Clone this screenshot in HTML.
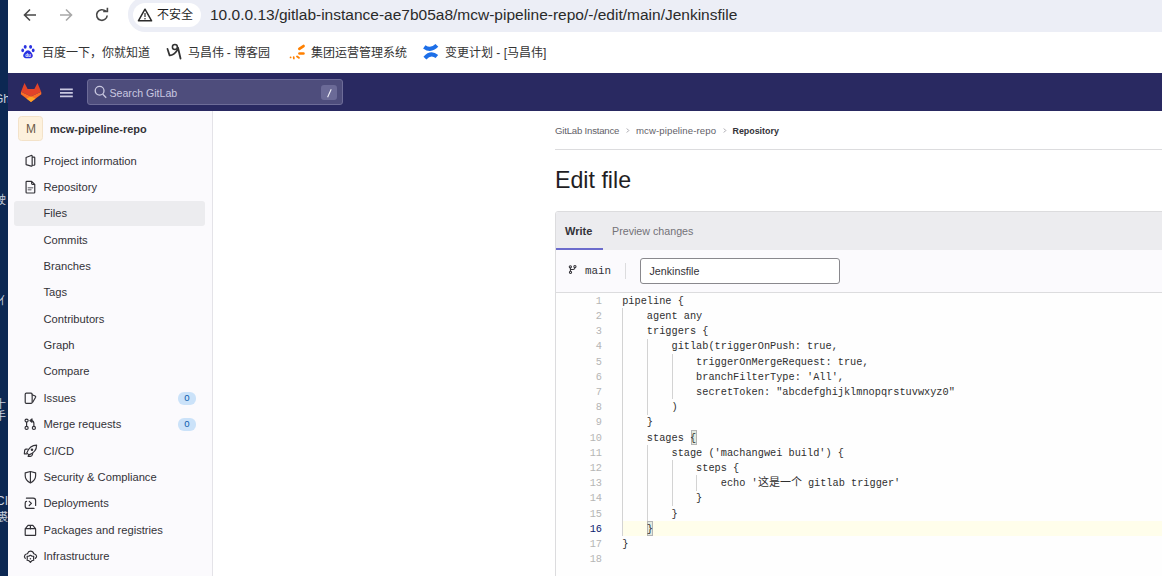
<!DOCTYPE html>
<html lang="zh-CN"><head><meta charset="utf-8">
<style>
*{box-sizing:border-box;margin:0;padding:0}
html,body{width:1162px;height:576px;overflow:hidden;background:#fff;font-family:"Liberation Sans",sans-serif;color:#333238}
.a{position:absolute;white-space:nowrap}
#desk{left:0;top:0;width:8px;height:576px;background:#0c2853;overflow:hidden}
#desk span{position:absolute;color:#c9d0de;font-size:11px;line-height:12px}
#toolbar{left:8px;top:0;width:1154px;height:33px;background:#fff}
#pill{left:128px;top:-3px;width:1060px;height:34.5px;border-radius:17px;background:#eceef6}
#sec{left:133px;top:3px;width:68px;height:24px;border-radius:12px;background:#fff}
#url{left:210px;top:6.3px;font-size:15.5px;line-height:18px;color:#2a2a2a}
#bm{left:8px;top:33px;width:1154px;height:40px;background:#fff}
.bmt{font-size:12px;line-height:14px;color:#333;top:46px}
#hdr{left:8px;top:73px;width:1154px;height:38px;background:#292961}
#search{left:87px;top:79px;width:256px;height:26px;border-radius:3px;background:#4e4d7c;border:1px solid #6d6c98}
#side{left:8px;top:111px;width:205px;height:465px;background:#fbfafd;border-right:1px solid #e4e3e8}
.nav{left:43.5px;font-size:11.2px;line-height:13px;color:#333238}
.ico{position:absolute;left:24px}
#main{left:213px;top:111px;width:949px;height:465px;background:#fff}
.code{font-family:"Liberation Mono",monospace;font-size:10.27px;line-height:15.2px;color:#303030;white-space:pre}
</style></head><body>
<div id="desk" class="a">
  <span style="left:-6px;top:93px;font-size:12px">Gh</span>
  <span style="left:-5px;top:194px">驶</span>
  <span style="left:-1px;top:295px">亻</span>
  <span style="left:-5px;top:398px">十</span>
  <span style="left:-5px;top:410px">手</span>
  <span style="left:-4px;top:495px;font-size:12px">CI</span>
  <span style="left:-3px;top:511px">裘</span>
</div>
<div id="toolbar" class="a"></div>
<!-- nav icons -->
<svg class="a" style="left:22px;top:6px" width="16" height="18" viewBox="0 0 16 18"><path d="M14 9H3M8 3.5L2.5 9 8 14.5" fill="none" stroke="#474747" stroke-width="1.6"/></svg>
<svg class="a" style="left:58px;top:6px" width="16" height="18" viewBox="0 0 16 18"><path d="M2 9h11M8 3.5L13.5 9 8 14.5" fill="none" stroke="#a8a8a8" stroke-width="1.6"/></svg>
<svg class="a" style="left:94px;top:6px" width="16" height="18" viewBox="0 0 16 18"><path d="M13.2 9.5A5.3 5.3 0 1 1 11.6 5.2" fill="none" stroke="#474747" stroke-width="1.6"/><path d="M9.2 5.4h4.2V1.8" fill="none" stroke="#474747" stroke-width="1.6"/></svg>
<div id="pill" class="a"></div>
<div id="sec" class="a"></div>
<svg class="a" style="left:137px;top:8px" width="16" height="14" viewBox="0 0 16 14"><path d="M8 1.2L14.6 12.8H1.4Z" fill="none" stroke="#2b2b2b" stroke-width="1.5" stroke-linejoin="round"/><path d="M8 5v4" stroke="#2b2b2b" stroke-width="1.2"/><circle cx="8" cy="10.8" r=".8" fill="#2b2b2b"/></svg>
<div class="a" style="left:157px;top:7.5px;font-size:12px;line-height:14px;color:#1f1f1f">不安全</div>
<div id="url" class="a">10.0.0.13/gitlab-instance-ae7b05a8/mcw-pipeline-repo/-/edit/main/Jenkinsfile</div>

<div id="bm" class="a"></div>
<!-- baidu paw -->
<svg class="a" style="left:21px;top:44px" width="14" height="15" viewBox="0 0 14 15"><ellipse cx="4.2" cy="2.8" rx="1.5" ry="1.9" fill="#2932e1"/><ellipse cx="9.6" cy="2.8" rx="1.5" ry="1.9" fill="#2932e1"/><ellipse cx="1.7" cy="6.4" rx="1.4" ry="1.8" fill="#2932e1"/><ellipse cx="12.2" cy="6.4" rx="1.4" ry="1.8" fill="#2932e1"/><path d="M7 6.2c-2 0-4.8 3.5-4.8 5.6 0 1.6 1.4 2.4 2.6 2.4h4.4c1.3 0 2.6-.8 2.6-2.4C11.8 9.7 9 6.2 7 6.2z" fill="#2932e1"/><text x="7" y="12.6" font-size="4.5" fill="#fff" text-anchor="middle" font-family="Liberation Sans" font-weight="bold">du</text></svg>
<div class="a bmt" style="left:41.5px">百度一下，你就知道</div>
<svg class="a" style="left:160px;top:38px" width="30" height="26" viewBox="0 0 665 576" fill="none" stroke="#333" stroke-linecap="round" stroke-linejoin="round"><circle cx="330" cy="200" r="55" stroke-width="34"/><path d="M165 240 L212 385 Q300 392 392 262" stroke-width="38"/><path d="M398 212 L455 455" stroke-width="40"/></svg>
<div class="a bmt" style="left:187.5px">马昌伟 - 博客园</div>
<svg class="a" style="left:284px;top:38px" width="30" height="26" viewBox="0 0 665 576" fill="none" stroke="#ff8000" stroke-linecap="round"><path d="M340 240 L432 178" stroke-width="62"/><path d="M342 342 H432" stroke-width="55"/><path d="M290 410 L330 437" stroke-width="45"/><path d="M215 425 L218 455" stroke-width="38"/><circle cx="146" cy="430" r="20" fill="#ff8000" stroke="none"/></svg>
<div class="a bmt" style="left:311px">集团运营管理系统</div>
<svg class="a" style="left:415px;top:38px" width="30" height="26" viewBox="0 0 665 576" fill="none" stroke="#1d6fe8"><path d="M205 195 Q350 300 485 165" stroke-width="88"/><path d="M220 445 Q350 300 485 410" stroke-width="88"/></svg>
<div class="a bmt" style="left:445px">变更计划 - [马昌伟]</div>

<div id="hdr" class="a"></div>
<!-- tanuki -->
<svg class="a" style="left:8px;top:66px" width="80" height="50" viewBox="0 0 922 576"><path d="M150 298 L190 195 L226 266 L304 266 L340 195 L382 298 L265 352 Z" fill="#e24329"/><path d="M150 298 L265 352 L265 415 L148 326 Z" fill="#fc6d26"/><path d="M382 298 L265 352 L265 415 L384 326 Z" fill="#fc6d26"/><path d="M212 375 L265 352 L318 375 L265 415 Z" fill="#fca326"/></svg>
<svg class="a" style="left:59.8px;top:87.5px" width="14" height="10" viewBox="0 0 14 10"><path d="M0 1.4h12.8M0 4.9h12.8M0 8.4h12.8" stroke="#c9c8e0" stroke-width="1.6"/></svg>
<div id="search" class="a"></div>
<svg class="a" style="left:94px;top:85px" width="13" height="14" viewBox="0 0 13 14"><circle cx="5.6" cy="5.8" r="4.4" fill="none" stroke="#c9c8e0" stroke-width="1.3"/><path d="M8.8 9.2l3.4 3.6" stroke="#c9c8e0" stroke-width="1.3"/></svg>
<div class="a" style="left:109.5px;top:86.5px;font-size:10.6px;line-height:13px;color:#c9c8e0">Search GitLab</div>
<div class="a" style="left:321px;top:85px;width:16px;height:14.7px;border-radius:3px;background:#6b6a97"></div><svg class="a" style="left:321px;top:85px" width="16" height="15" viewBox="0 0 16 15"><path d="M6.6 12.2L10.2 4.2" stroke="#f0f0f8" stroke-width="1.1"/></svg>

<div id="side" class="a"></div>
<div id="main" class="a"></div>
<!-- project header in sidebar -->
<div class="a" style="left:18.3px;top:116.3px;width:25.2px;height:25.2px;border-radius:3.5px;background:#fdf1dd;border:1px solid #f3e2c9"></div>
<div class="a" style="left:18.3px;top:122.2px;width:25.2px;text-align:center;font-size:12px;line-height:14px;color:#6b5a48">M</div>
<div class="a" style="left:50px;top:122.6px;font-size:10.95px;line-height:13px;font-weight:bold;color:#333238">mcw-pipeline-repo</div>
<!-- files active -->
<div class="a" style="left:14px;top:201px;width:191px;height:25px;border-radius:3px;background:#ececef"></div>
<!-- breadcrumb -->
<div class="a" style="left:555px;top:124.5px;font-size:9.6px;line-height:12px;letter-spacing:-0.2px;color:#626168">GitLab Instance</div>
<svg class="a" style="left:625px;top:126px" width="6" height="9" viewBox="0 0 6 9"><path d="M1.8 2.5L3.8 4.5 1.8 6.5" fill="none" stroke="#9c9ba3" stroke-width="0.9"/></svg>
<div class="a" style="left:636px;top:124.5px;font-size:9.6px;line-height:12px;letter-spacing:0.1px;color:#626168">mcw-pipeline-repo</div>
<svg class="a" style="left:721.5px;top:126px" width="6" height="9" viewBox="0 0 6 9"><path d="M1.8 2.5L3.8 4.5 1.8 6.5" fill="none" stroke="#9c9ba3" stroke-width="0.9"/></svg>
<div class="a" style="left:732.5px;top:124.8px;font-size:8.9px;line-height:12px;font-weight:bold;color:#333238">Repository</div>
<div class="a" style="left:555px;top:148.5px;width:607px;height:1px;background:#dcdcde"></div>
<!-- title -->
<div class="a" style="left:555px;top:167px;font-size:23.2px;line-height:26px;color:#1f1e24">Edit file</div>
<!-- editor frame -->
<div class="a" style="left:555px;top:211px;width:620px;height:380px;border:1px solid #dcdcde;border-radius:3px 0 0 0;background:#fefefe"></div>
<div class="a" style="left:556px;top:212px;width:606px;height:38px;border-radius:2px 0 0 0;background:#ececef"></div>
<div class="a" style="left:556px;top:248.2px;width:47px;height:1.9px;background:#6b6bcc"></div>
<div class="a" style="left:565px;top:224.5px;font-size:11px;line-height:13px;font-weight:bold;color:#333238">Write</div>
<div class="a" style="left:612px;top:224.5px;font-size:10.7px;line-height:13px;color:#737278">Preview changes</div>
<div class="a" style="left:556px;top:250px;width:606px;height:43px;background:#fbfafd;border-bottom:1px solid #dcdcde"></div>
<svg class="a" style="left:562px;top:260px" width="30" height="20" viewBox="0 0 864 576" fill="none" stroke="#333238" stroke-width="30"><circle cx="240" cy="195" r="32"/><circle cx="372" cy="190" r="32"/><circle cx="245" cy="355" r="32"/><path d="M242 231 V319 M242 272 H325 Q372 272 372 226"/></svg>
<div class="a code" style="left:585px;top:263.6px;font-size:10.9px;color:#333238">main</div>
<div class="a" style="left:625px;top:263px;width:1px;height:16px;background:#dcdcde"></div>
<div class="a" style="left:640px;top:258px;width:200px;height:26px;border-radius:3px;border:1px solid #89888d;background:#fff"></div>
<div class="a" style="left:649.5px;top:264.5px;font-size:10.7px;line-height:13px;color:#333238">Jenkinsfile</div>

<!--SIDE-->
<div class="a nav" style="top:154.6px">Project information</div>
<svg class="a" style="left:20px;top:150px" width="20" height="20" viewBox="0 0 576 576" fill="none" stroke="#333238" stroke-width="34" stroke-linejoin="round" stroke-linecap="round"><path d="M175 215 L322 160 Q350 150 350 178 V440 Q350 472 322 464 L175 420 Z M350 205 H405 Q425 205 425 225 V420 Q425 440 405 440 H350"/></svg>
<div class="a nav" style="top:180.9px">Repository</div>
<svg class="a" style="left:20px;top:177px" width="20" height="20" viewBox="0 0 576 576" fill="none" stroke="#333238" stroke-width="34" stroke-linejoin="round" stroke-linecap="round"><path d="M195 125 H335 L425 215 V440 Q425 460 405 460 H195 Q175 460 175 440 V145 Q175 125 195 125 Z M335 130 V190 Q335 215 360 215 H420"/><path d="M240 310 H365 M240 365 H315" stroke="#8a898f" stroke-width="45"/></svg>
<div class="a nav" style="top:207.3px">Files</div>
<div class="a nav" style="top:233.7px">Commits</div>
<div class="a nav" style="top:260.0px">Branches</div>
<div class="a nav" style="top:286.4px">Tags</div>
<div class="a nav" style="top:312.7px">Contributors</div>
<div class="a nav" style="top:339.1px">Graph</div>
<div class="a nav" style="top:365.4px">Compare</div>
<div class="a nav" style="top:391.8px">Issues</div>
<svg class="a" style="left:20px;top:388px" width="20" height="20" viewBox="0 0 576 576" fill="none" stroke="#333238" stroke-width="34" stroke-linejoin="round" stroke-linecap="round"><rect x="150" y="150" width="200" height="295" rx="32"/><path d="M350 195 L435 232 Q460 245 450 268 L365 410"/></svg>
<div class="a nav" style="top:418.1px">Merge requests</div>
<svg class="a" style="left:20px;top:414px" width="20" height="20" viewBox="0 0 576 576" fill="none" stroke="#333238" stroke-width="34" stroke-linejoin="round" stroke-linecap="round"><circle cx="190" cy="190" r="45"/><circle cx="190" cy="400" r="45"/><circle cx="400" cy="400" r="45"/><path d="M190 235 V355 M400 355 V275 Q400 200 335 190"/><path d="M285 190 L345 142 V238 Z" fill="#333238"/></svg>
<div class="a nav" style="top:444.5px">CI/CD</div>
<svg class="a" style="left:20px;top:440px" width="20" height="20" viewBox="0 0 576 576" fill="none" stroke="#333238" stroke-width="34" stroke-linejoin="round" stroke-linecap="round"><path d="M478 150 C370 150 262 205 195 372 L255 428 C420 368 478 262 478 150 Z"/><circle cx="345" cy="283" r="36" fill="#333238" stroke="none"/><path d="M212 262 H170 Q140 265 135 300 L125 400 H188 M255 430 L232 470 H300 Q345 465 355 430 L365 392"/></svg>
<div class="a nav" style="top:470.8px">Security &amp; Compliance</div>
<svg class="a" style="left:20px;top:467px" width="20" height="20" viewBox="0 0 576 576" fill="none" stroke="#333238" stroke-width="34" stroke-linejoin="round" stroke-linecap="round"><path d="M300 130 L450 168 V250 Q450 380 300 458 Q150 380 150 250 V168 Z M300 130 V458"/></svg>
<div class="a nav" style="top:497.2px">Deployments</div>
<svg class="a" style="left:20px;top:493px" width="20" height="20" viewBox="0 0 576 576" fill="none" stroke="#333238" stroke-width="34" stroke-linejoin="round" stroke-linecap="round"><path d="M185 150 H380 Q450 150 450 220 V360 M190 240 Q150 240 150 290 V380 Q150 445 215 445 H405 M265 240 L330 300 L265 360"/></svg>
<div class="a nav" style="top:523.5px">Packages and registries</div>
<svg class="a" style="left:20px;top:520px" width="20" height="20" viewBox="0 0 576 576" fill="none" stroke="#333238" stroke-width="34" stroke-linejoin="round" stroke-linecap="round"><rect x="150" y="250" width="300" height="195" rx="15"/><path d="M155 245 L230 155 H370 L445 245 M300 155 V255"/></svg>
<div class="a nav" style="top:549.9px">Infrastructure</div>
<svg class="a" style="left:20px;top:545px" width="20" height="20" viewBox="0 0 576 576" fill="none" stroke="#333238" stroke-width="34" stroke-linejoin="round" stroke-linecap="round"><path d="M152 385 Q110 340 140 292 Q168 252 215 252 Q240 178 300 178 Q378 178 398 252 Q468 262 478 322 Q484 360 440 385"/><path d="M300 295 L345 320 L395 325 L390 380 L395 440 L345 450 L300 500 L255 450 L205 440 L210 380 L205 325 L255 320 Z"/><circle cx="300" cy="395" r="22" fill="#333238" stroke="none"/></svg>
<!--/SIDE-->
<!--CODE-->
<div class="a" style="left:622.2px;top:521.0px;width:539.8px;height:15.2px;background:#fffeeb"></div>
<div class="a" style="left:622.2px;top:308.2px;width:1px;height:228.0px;background:#d3d3d3"></div>
<div class="a" style="left:646.8px;top:338.6px;width:1px;height:76.0px;background:#d3d3d3"></div>
<div class="a" style="left:671.5px;top:353.8px;width:1px;height:45.6px;background:#d3d3d3"></div>
<div class="a" style="left:646.8px;top:445.0px;width:1px;height:76.0px;background:#d3d3d3"></div>
<div class="a" style="left:671.5px;top:460.2px;width:1px;height:45.6px;background:#d3d3d3"></div>
<div class="a" style="left:696.1px;top:475.4px;width:1px;height:15.2px;background:#d3d3d3"></div>
<div class="a" style="left:690.6px;top:430.1px;width:6.0px;height:14.6px;background:#e4ebe0;border:1px solid #b4b4b4"></div>
<div class="a" style="left:647.4px;top:521.3px;width:6.0px;height:14.6px;background:#e4ebe0;border:1px solid #b4b4b4"></div>
<div class="a code" style="left:560px;width:42px;text-align:right;top:293.7px;color:#b5b5b5">1</div>
<div class="a code" style="left:622.2px;top:293.7px">pipeline {</div>
<div class="a code" style="left:560px;width:42px;text-align:right;top:308.9px;color:#b5b5b5">2</div>
<div class="a code" style="left:622.2px;top:308.9px">    agent any</div>
<div class="a code" style="left:560px;width:42px;text-align:right;top:324.1px;color:#b5b5b5">3</div>
<div class="a code" style="left:622.2px;top:324.1px">    triggers {</div>
<div class="a code" style="left:560px;width:42px;text-align:right;top:339.3px;color:#b5b5b5">4</div>
<div class="a code" style="left:622.2px;top:339.3px">        gitlab(triggerOnPush: true,</div>
<div class="a code" style="left:560px;width:42px;text-align:right;top:354.5px;color:#b5b5b5">5</div>
<div class="a code" style="left:622.2px;top:354.5px">            triggerOnMergeRequest: true,</div>
<div class="a code" style="left:560px;width:42px;text-align:right;top:369.7px;color:#b5b5b5">6</div>
<div class="a code" style="left:622.2px;top:369.7px">            branchFilterType: 'All',</div>
<div class="a code" style="left:560px;width:42px;text-align:right;top:384.9px;color:#b5b5b5">7</div>
<div class="a code" style="left:622.2px;top:384.9px">            secretToken: "abcdefghijklmnopqrstuvwxyz0"</div>
<div class="a code" style="left:560px;width:42px;text-align:right;top:400.1px;color:#b5b5b5">8</div>
<div class="a code" style="left:622.2px;top:400.1px">        )</div>
<div class="a code" style="left:560px;width:42px;text-align:right;top:415.3px;color:#b5b5b5">9</div>
<div class="a code" style="left:622.2px;top:415.3px">    }</div>
<div class="a code" style="left:560px;width:42px;text-align:right;top:430.5px;color:#b5b5b5">10</div>
<div class="a code" style="left:622.2px;top:430.5px">    stages {</div>
<div class="a code" style="left:560px;width:42px;text-align:right;top:445.7px;color:#b5b5b5">11</div>
<div class="a code" style="left:622.2px;top:445.7px">        stage ('machangwei build') {</div>
<div class="a code" style="left:560px;width:42px;text-align:right;top:460.9px;color:#b5b5b5">12</div>
<div class="a code" style="left:622.2px;top:460.9px">            steps {</div>
<div class="a code" style="left:560px;width:42px;text-align:right;top:476.1px;color:#b5b5b5">13</div>
<div class="a code" style="left:622.2px;top:476.1px">                echo '<span style="font-size:11px">这是一个</span> gitlab trigger'</div>
<div class="a code" style="left:560px;width:42px;text-align:right;top:491.3px;color:#b5b5b5">14</div>
<div class="a code" style="left:622.2px;top:491.3px">            }</div>
<div class="a code" style="left:560px;width:42px;text-align:right;top:506.5px;color:#b5b5b5">15</div>
<div class="a code" style="left:622.2px;top:506.5px">        }</div>
<div class="a code" style="left:560px;width:42px;text-align:right;top:521.7px;color:#0b216f">16</div>
<div class="a code" style="left:622.2px;top:521.7px">    }</div>
<div class="a code" style="left:560px;width:42px;text-align:right;top:536.9px;color:#b5b5b5">17</div>
<div class="a code" style="left:622.2px;top:536.9px">}</div>
<div class="a code" style="left:560px;width:42px;text-align:right;top:552.1px;color:#b5b5b5">18</div>
<div class="a code" style="left:622.2px;top:552.1px"></div>
<!--/CODE-->
<div class="a" style="left:178px;top:392px;width:18px;height:12.5px;border-radius:6px;background:#cbe2f9;color:#0b5cad;font-size:9.6px;line-height:12.5px;text-align:center">0</div>
<div class="a" style="left:178px;top:418.3px;width:18px;height:12.5px;border-radius:6px;background:#cbe2f9;color:#0b5cad;font-size:9.6px;line-height:12.5px;text-align:center">0</div>
</body></html>
